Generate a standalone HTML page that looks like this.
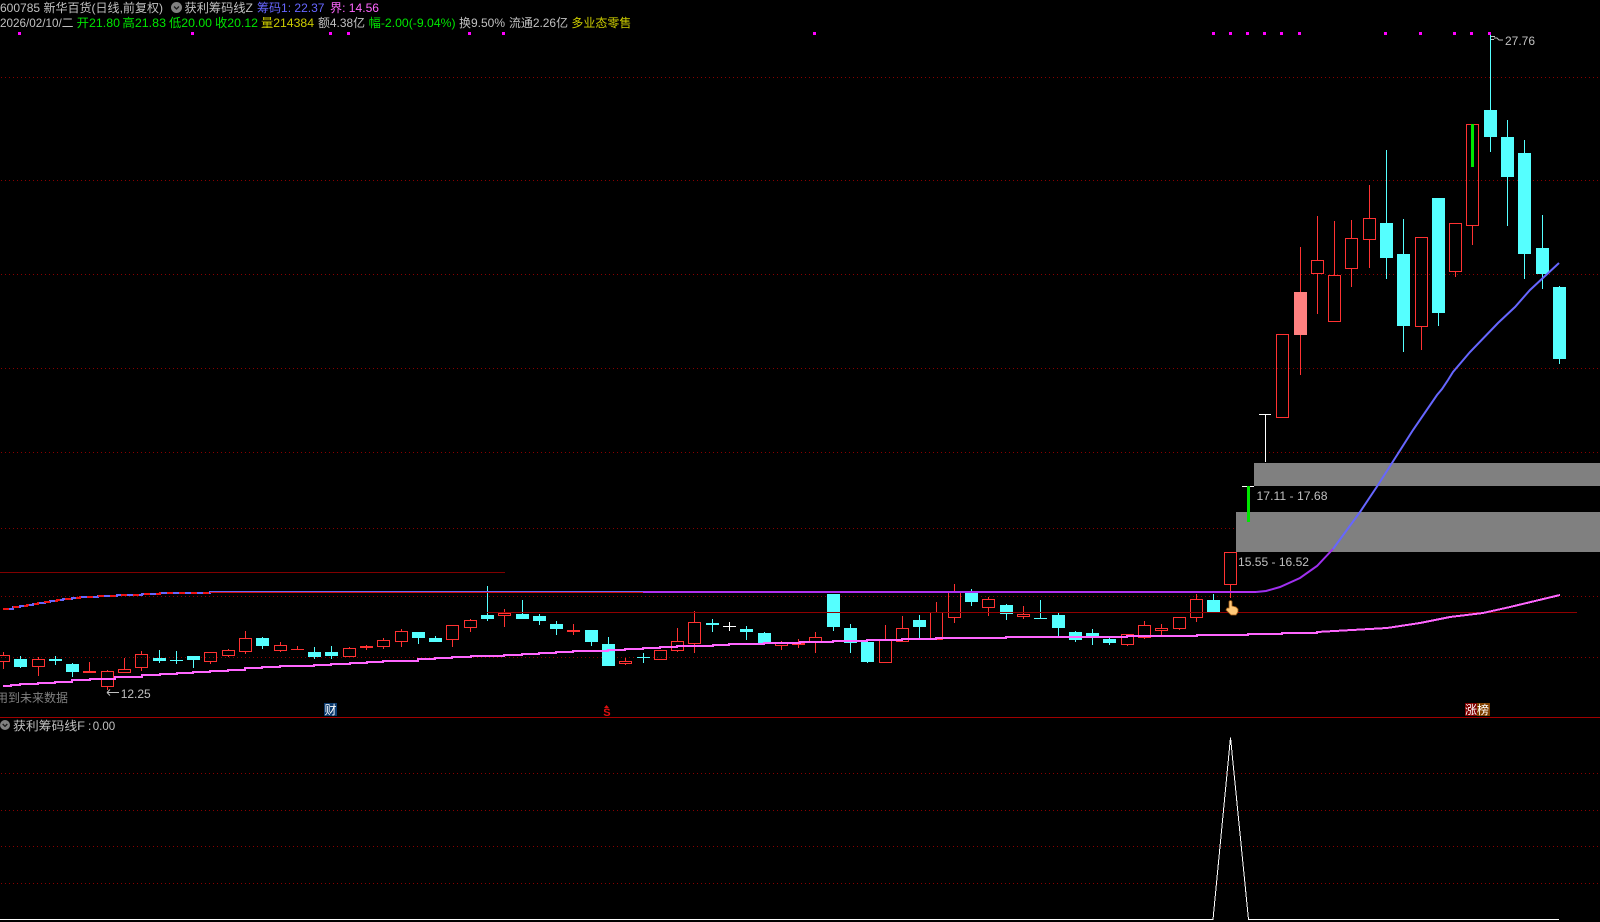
<!DOCTYPE html>
<html><head><meta charset="utf-8"><style>
html,body{margin:0;padding:0;background:#000;width:1600px;height:922px;overflow:hidden}
svg{display:block;position:absolute;left:0;top:0}
text{font-family:"Liberation Sans","WenQuanYi Zen Hei","Noto Sans CJK SC",sans-serif;font-size:12px;white-space:pre}
.c{shape-rendering:crispEdges}
</style></head><body>
<svg width="1600" height="922" viewBox="0 0 1600 922" xmlns="http://www.w3.org/2000/svg">
<rect width="1600" height="922" fill="#000"/>
<!-- dotted grid -->
<path class="c" fill="none" stroke="#8a0000" stroke-dasharray="1 3" d="M1 77.5H1600M1 180.5H1600M1 274.5H1600M1 368.5H1600M1 452.5H1600M1 528.5H1600M1 596.5H1600M1 657.5H1600M1 773.5H1600M1 810.5H1600M1 846.5H1600M1 883.5H1600"/>
<!-- solid lines -->
<path class="c" fill="none" stroke="#800000" d="M0 572.5H505"/>
<path class="c" fill="none" stroke="#a00000" d="M0 717.5H1600"/>
<!-- gray zones -->
<rect class="c" x="1254" y="463" width="346" height="23" fill="#808080"/>
<rect class="c" x="1236" y="512" width="364" height="40" fill="#808080"/>
<!-- cyan candles -->
<path class="c" fill="#55ffff" d="M14 659H27V667H14zM49 659H62V661H49zM66 664H79V672H66zM153 658H166V661H153zM170 660H183V661H170zM187 656H200V660H187zM256 638H269V646H256zM308 652H321V657H308zM325 652H338V656H325zM412 632H425V638H412zM429 638H442V642H429zM481 615H494V619H481zM516 614H529V619H516zM533 616H546V621H533zM550 624H563V629H550zM585 630H598V642H585zM602 644H615V666H602zM637 657H650V658H637zM706 623H719V625H706zM740 629H753V632H740zM758 633H771V643H758zM827 594H840V627H827zM844 628H857V643H844zM861 642H874V662H861zM913 620H926V627H913zM965 592H978V602H965zM1000 605H1013V614H1000zM1034 618H1047V619H1034zM1052 615H1065V628H1052zM1069 632H1082V640H1069zM1086 633H1099V637H1086zM1103 639H1116V643H1103zM1207 600H1220V612H1207zM1380 223H1393V258H1380zM1397 254H1410V326H1397zM1432 198H1445V313H1432zM1484 110H1497V137H1484zM1501 137H1514V177H1501zM1518 153H1531V254H1518zM1536 248H1549V274H1536zM1553 287H1566V359H1553z"/>
<path class="c" fill="none" stroke="#55ffff" d="M20.5 656V668M55.5 656V665M72.5 663V677M159.5 650V663M176.5 651V664M193.5 656V668M262.5 637V649M314.5 647V659M331.5 646V659M418.5 632V644M435.5 636V642M487.5 586V621M522.5 600V619M539.5 614V625M556.5 621V635M591.5 630V646M608.5 637V666M643.5 653V663M712.5 619V632M746.5 626V640M764.5 632V643M833.5 594V631M850.5 624V653M867.5 642V663M919.5 615V638M971.5 589V606M1006.5 604V620M1040.5 600V619M1058.5 613V636M1075.5 631V642M1092.5 629V645M1109.5 638V645M1213.5 594V612M1386.5 150V279M1403.5 219V352M1438.5 198V326M1490.5 35V152M1507.5 120V226M1524.5 140V279M1542.5 215V289M1559.5 286V364"/>
<!-- red solid candles -->
<path class="c" fill="#ff3232" d="M83 671H96V673H83zM291 649H304V650H291zM360 646H373V648H360zM567 630H580V632H567zM792 643H805V645H792z"/>
<path class="c" fill="#ff8080" d="M1294 292H1307V335H1294z"/>
<path class="c" fill="none" stroke="#ff3232" d="M89.5 662V673M297.5 646V650M366.5 645V650M573.5 624V635M798.5 639V648M1300.5 247V292M1300.5 335V375"/>
<!-- red hollow candles -->
<path class="c" fill="none" stroke="#ff3232" d="M-2.5 655.5H9.5V661.5H-2.5zM3.5 652V655M3.5 662V669
M32.5 659.5H44.5V666.5H32.5zM38.5 657V659M38.5 667V676
M101.5 671.5H113.5V686.5H101.5zM107.5 670V671M107.5 687V690
M118.5 669.5H130.5V672.5H118.5zM124.5 658V669
M135.5 654.5H147.5V667.5H135.5zM141.5 651V654M141.5 668V671
M204.5 652.5H216.5V661.5H204.5zM210.5 662V664
M222.5 650.5H234.5V655.5H222.5zM228.5 649V650M228.5 656V657
M239.5 638.5H251.5V651.5H239.5zM245.5 631V638M245.5 652V654
M274.5 645.5H286.5V650.5H274.5zM280.5 642V645M280.5 651V652
M343.5 648.5H355.5V656.5H343.5zM349.5 647V648
M377.5 640.5H389.5V646.5H377.5zM383.5 638V640M383.5 647V649
M395.5 631.5H407.5V641.5H395.5zM401.5 629V631M401.5 642V647
M446.5 625.5H458.5V639.5H446.5zM452.5 640V647
M464.5 620.5H476.5V627.5H464.5zM470.5 619V620M470.5 628V632
M498.5 613.5H510.5V615.5H498.5zM504.5 609V613M504.5 616V627
M619.5 661.5H631.5V663.5H619.5zM625.5 658V661M625.5 664V665
M654.5 650.5H666.5V659.5H654.5z
M671.5 641.5H683.5V650.5H671.5zM677.5 628V641M677.5 651V652
M688.5 622.5H700.5V643.5H688.5zM694.5 611V622M694.5 644V653
M775.5 643.5H787.5V645.5H775.5zM781.5 641V643M781.5 646V650
M809.5 637.5H821.5V642.5H809.5zM815.5 632V637M815.5 643V653
M879.5 640.5H891.5V662.5H879.5zM885.5 625V640
M896.5 628.5H908.5V641.5H896.5zM902.5 616V628
M930.5 612.5H942.5V639.5H930.5zM936.5 602V612
M948.5 592.5H960.5V617.5H948.5zM954.5 584V592M954.5 618V623
M982.5 599.5H994.5V607.5H982.5zM988.5 597V599M988.5 608V616
M1017.5 614.5H1029.5V616.5H1017.5zM1023.5 606V614M1023.5 617V619
M1121.5 634.5H1133.5V644.5H1121.5zM1127.5 645V646
M1138.5 625.5H1150.5V637.5H1138.5zM1144.5 621V625M1144.5 638V639
M1155.5 628.5H1167.5V630.5H1155.5zM1161.5 624V628M1161.5 631V636
M1173.5 617.5H1185.5V628.5H1173.5zM1179.5 629V630
M1190.5 599.5H1202.5V617.5H1190.5zM1196.5 594V599M1196.5 618V622
M1224.5 552.5H1236.5V584.5H1224.5zM1230.5 585V598
M1276.5 334.5H1288.5V417.5H1276.5z
M1311.5 260.5H1323.5V273.5H1311.5zM1317.5 216V260M1317.5 274V314
M1328.5 275.5H1340.5V321.5H1328.5zM1334.5 221V275
M1345.5 238.5H1357.5V268.5H1345.5zM1351.5 220V238M1351.5 269V287
M1363.5 218.5H1375.5V239.5H1363.5zM1369.5 185V218M1369.5 240V268
M1415.5 237.5H1427.5V326.5H1415.5zM1421.5 327V350
M1449.5 223.5H1461.5V271.5H1449.5zM1455.5 272V277
M1466.5 124.5H1478.5V225.5H1466.5zM1472.5 226V245"/>
<!-- white doji -->
<path class="c" fill="none" stroke="#fff" d="M723 626.5H736M729.5 622V631M1242 486.5H1254M1265.5 414V462M1259 414.5H1271"/>
<!-- green bars -->
<rect class="c" x="1247" y="486" width="3" height="36" fill="#00e600"/>
<rect class="c" x="1471" y="124" width="3" height="43" fill="#00e600"/>
<!-- red horizontal -->
<path class="c" fill="none" stroke="#900000" d="M487 612.5H1577"/>
<!-- upper MA -->
<path class="c" fill="none" stroke="#6666ff" stroke-width="2" d="M3 609H13V607H20V606H27V605H33V604H38V603H45V602H50V601H57V600H63V599H72V598H80V597H98V596H117V595H142V594H160V593H210V592H643"/>
<path class="c" fill="none" stroke="#f01414" stroke-width="2" stroke-dasharray="6 6" d="M3 609H13V607H20V606H27V605H33V604H38V603H45V602H50V601H57V600H63V599H72V598H80V597H98V596H117V595H142V594H160V593H210"/>
<path class="c" fill="none" stroke="#d01010" stroke-width="1" d="M210 592.5H643"/>
<path class="c" fill="none" stroke="#b030f0" stroke-width="2" d="M643 592H1256"/>
<path fill="none" stroke="#a030f0" stroke-width="2" d="M1256 592L1266 591L1280 587L1300 578L1317 566L1333 549"/>
<path fill="none" stroke="#6666ff" stroke-width="2" d="M1333 549L1360 512L1378 485L1392 463L1413 430L1437 395L1442 389L1448 380L1453 372L1470 352L1498 323L1515 307L1530 290L1559 263"/>
<!-- lower MA -->
<path class="c" fill="none" stroke="#ff66ff" stroke-width="2" d="M3 686H11V685H20V684H38V683H55V682H72V680H90V679H115V677H142V675H160V674H177V673H193V672H210V671H228V670H245V668H262V667H280V666H314V665H331V664H350V663H367V662H383V661H418V659H435V658H452V657H471V656H504V655H522V654H539V653H556V652H573V651H608V650H625V649H643V648H660V647H677V646H713V645H729V644H764V643H800V642H833V641H867V640H902V639H936V638H1006V637H1127V636H1197V635H1248V634H1282V633H1317V632L1352 630L1387 628L1420 623L1450 617L1483 613L1510 607L1560 595"/>
<!-- magenta dots -->
<path class="c" fill="#ff00ff" d="M18 32h3v3h-3zM191 32h3v3h-3zM329 32h3v3h-3zM347 32h3v3h-3zM468 32h3v3h-3zM502 32h3v3h-3zM813 32h3v3h-3zM1212 32h3v3h-3zM1229 32h3v3h-3zM1246 32h3v3h-3zM1263 32h3v3h-3zM1280 32h3v3h-3zM1298 32h3v3h-3zM1384 32h3v3h-3zM1419 32h3v3h-3zM1453 32h3v3h-3zM1470 32h3v3h-3zM1488 32h3v3h-3z"/>
<!-- sub chart -->
<path class="c" fill="none" stroke="#fff" stroke-width="1" d="M0 919.5H1213L1230.5 737.5L1248.5 919.5H1559"/>
<!-- hand -->
<path d="M1229 608V601.5Q1230.5 599.5 1232 601.5V606L1236 607L1238 609V612L1236 615H1231L1226 610L1227 608Z" fill="#ffc878" stroke="#a05a14" stroke-width=".8"/>
<!-- arrows -->
<path fill="none" stroke="#c0c0c0" d="M107 692.5H119M107 692.5L110 689.5M107 692.5L110 695.5M1491 36.5H1495M1491 39.5H1494M1494 38L1497 38L1499 40L1503 40"/>
<!-- header -->
<circle cx="176.5" cy="7.5" r="5.5" fill="#808080"/>
<path d="M174 6.5L176.5 9L179 6.5" fill="none" stroke="#1a1a1a" stroke-width="1.3"/>
<text x="0" y="12" fill="#c0c0c0" textLength="163" lengthAdjust="spacingAndGlyphs">600785 新华百货(日线,前复权)</text>
<text x="184.5" y="12" fill="#c0c0c0" textLength="68.5" lengthAdjust="spacingAndGlyphs">获利筹码线Z</text>
<text x="257" y="12" fill="#6666ff" textLength="67.5" lengthAdjust="spacingAndGlyphs">筹码1: 22.37</text>
<text x="330" y="12" fill="#ff66ff" textLength="49" lengthAdjust="spacingAndGlyphs">界: 14.56</text>
<text x="0" y="27" fill="#c0c0c0" textLength="73.5" lengthAdjust="spacingAndGlyphs">2026/02/10/二</text>
<text x="76.7" y="27" fill="#00e600" textLength="43.3" lengthAdjust="spacingAndGlyphs">开21.80</text>
<text x="122.4" y="27" fill="#00e600" textLength="43.6" lengthAdjust="spacingAndGlyphs">高21.83</text>
<text x="169" y="27" fill="#00e600" textLength="43" lengthAdjust="spacingAndGlyphs">低20.00</text>
<text x="215" y="27" fill="#00e600" textLength="43" lengthAdjust="spacingAndGlyphs">收20.12</text>
<text x="261" y="27" fill="#cccc00" textLength="53" lengthAdjust="spacingAndGlyphs">量214384</text>
<text x="318" y="27" fill="#c0c0c0" textLength="47" lengthAdjust="spacingAndGlyphs">额4.38亿</text>
<text x="368.6" y="27" fill="#00e600" textLength="87" lengthAdjust="spacingAndGlyphs">幅-2.00(-9.04%)</text>
<text x="459" y="27" fill="#c0c0c0" textLength="46" lengthAdjust="spacingAndGlyphs">换9.50%</text>
<text x="509" y="27" fill="#c0c0c0" textLength="59" lengthAdjust="spacingAndGlyphs">流通2.26亿</text>
<text x="571.4" y="27" fill="#cccc00" textLength="60" lengthAdjust="spacingAndGlyphs">多业态零售</text>
<!-- labels -->
<text x="1505" y="45" fill="#c0c0c0" textLength="30" lengthAdjust="spacingAndGlyphs">27.76</text>
<text x="120.7" y="698" fill="#c0c0c0" textLength="30" lengthAdjust="spacingAndGlyphs">12.25</text>
<text x="1256.5" y="500" fill="#c0c0c0" textLength="71" lengthAdjust="spacingAndGlyphs">17.11 - 17.68</text>
<text x="1238" y="566" fill="#c0c0c0" textLength="71" lengthAdjust="spacingAndGlyphs">15.55 - 16.52</text>
<text x="-4" y="702" fill="#808080">用到未来数据</text>
<!-- badges -->
<rect class="c" x="324" y="703" width="13" height="13" fill="#0a3a6e"/>
<text x="324.5" y="714" fill="#fff">财</text>
<path d="M604 708L606.5 705L609 708Z" fill="#e01010"/>
<text x="603.3" y="716" fill="#e01010" style="font-size:11px;font-weight:bold">S</text>
<rect class="c" x="1465" y="703" width="12" height="13" fill="#800000"/>
<rect class="c" x="1477" y="703" width="13" height="13" fill="#804000"/>
<text x="1465" y="714" fill="#fff">涨榜</text>
<!-- sub title -->
<circle cx="5" cy="725" r="5" fill="#808080"/>
<path d="M2.7 724L5 726.3L7.3 724" fill="none" stroke="#1a1a1a" stroke-width="1.3"/>
<text x="13" y="730" fill="#c0c0c0" textLength="72" lengthAdjust="spacingAndGlyphs">获利筹码线F</text>
<text x="88" y="730" fill="#c0c0c0">:</text>
<text x="92.7" y="730" fill="#c0c0c0" textLength="22.5" lengthAdjust="spacingAndGlyphs">0.00</text>
</svg>
</body></html>
